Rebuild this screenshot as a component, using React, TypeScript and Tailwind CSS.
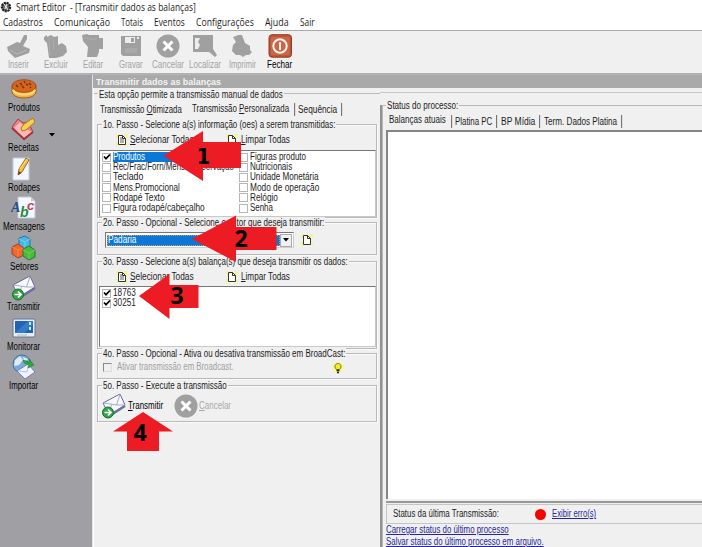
import { useLayoutEffect, useRef } from "react";
import type { ReactNode } from "react";

/* Condensed label: the text is squeezed to the width of its box. */
function T({ w, children, className = "", link = false }: { w: string; children: ReactNode; className?: string; link?: boolean }) {
  const box = useRef<HTMLSpanElement>(null);
  const inner = useRef<HTMLSpanElement>(null);
  useLayoutEffect(() => {
    if (!box.current || !inner.current) return;
    const natural = inner.current.offsetWidth;
    if (natural) inner.current.style.transform = `scaleX(${box.current.clientWidth / natural})`;
  });
  return (
    <span ref={box} className={`block h-3 shrink-0 leading-3 whitespace-pre ${w} ${className}`}>
      <span ref={inner} className={`inline-block origin-left ${link ? "underline" : ""}`}>{children}</span>
    </span>
  );
}

function Group({ legend, w, className = "", children }: { legend: string; w: string; className?: string; children?: ReactNode }) {
  return (
    <section className={`relative w-[280px] shrink-0 border border-[#b9b9b9] shadow-[inset_1px_1px_0_#fafafa,1px_1px_0_#fafafa] ${className}`}>
      <div className="absolute -top-[6px] left-[4px] h-[11px] bg-[#f0f0f0] px-[1px]">
        <T w={w} className="-mt-[0.500px]">{legend}</T>
      </div>
      {children}
    </section>
  );
}

function Doc({ lines = false }: { lines?: boolean }) {
  return (
    <svg viewBox="0 0 12 12" className="size-3 shrink-0">
      <path d="M0 0h4v4H0zM0 8h3v4H0zM8 0h4v4H8zM9 9h3v3H9z" fill="#f5f3a0" />
      <path d="M2.500 1.500h4l3 3v6h-7z" fill="#fffff2" stroke="#333" />
      <path d="M6.500 1.500v3h3" fill="none" stroke="#333" />
      {lines && <path d="M4 4h2M4 6h4M4 8h4" stroke="#333" strokeWidth=".8" />}
    </svg>
  );
}

function Check({ on = false }: { on?: boolean }) {
  return (
    <span className="flex size-[9px] shrink-0 items-center justify-center border border-[#b5b5b5] bg-white">
      {on && (
        <svg viewBox="0 0 8 8" className="size-2 shrink-0">
          <path d="M1 3.500l2 2.200L7 1.500" fill="none" stroke="#000" strokeWidth="1.700" />
        </svg>
      )}
    </span>
  );
}

function SelectButtons() {
  return (
    <div className="flex h-3 items-center pl-[18px]">
      <Doc lines />
      <T w="w-[64px]" className="ml-[2px]"><u>S</u>elecionar Todas</T>
      <span className="w-[32px]" />
      <Doc />
      <T w="w-[49px]" className="ml-[3px]"><u>L</u>impar Todas</T>
    </div>
  );
}

function Mail() {
  return (
    <svg viewBox="0 0 26 26" className="size-[26px] shrink-0">
      <path d="M2 10L19 1l5 11-16 10z" fill="#f8f9ff" stroke="#656b90" />
      <path d="M2.500 10l13 2 3.500-10.500M8 21l2.500-9.500M24 12l-8.500 0" fill="none" stroke="#a4a9cc" />
      <path d="M8 22l16-10 .5 2L9 24z" fill="#6672a0" />
      <circle cx="7" cy="19.500" r="5.500" fill="#31a444" stroke="#17702a" />
      <path d="M3.500 19.500h6M7 16.500l3 3-3 3" fill="none" stroke="#fff" strokeWidth="1.700" />
    </svg>
  );
}

const tool = "size-6 shrink-0";
const toolbar: { label: string; w: string; icon: ReactNode; active?: boolean }[] = [
  { label: "Inserir", w: "w-[21px]", icon: (
    <svg viewBox="0 0 24 24" className={tool} fill="#a0a0a0"><path d="M0 13l10-5 3 1 4-8h3v4l-4 7 7 3-1 4-14 5L1 17z" /><path d="M3 16l7 4 10-4" fill="none" stroke="#b9b9b9" /></svg>) },
  { label: "Excluir", w: "w-[24px]", icon: (
    <svg viewBox="0 0 24 24" className={tool} fill="#a0a0a0"><path d="M0 3l3-2v2l4-2 3 2 4-1v9l4-2 4 3 1 6-4 4-7 2H5L3 9 0 6z" /><path d="M5 4l1 17M9 5l1 11" fill="none" stroke="#adadad" /></svg>) },
  { label: "Editar", w: "w-[20px]", icon: (
    <svg viewBox="0 0 24 24" className={tool} fill="#a0a0a0"><path d="M1 1l5-1 2 1h10v3h4v11h-4v3l-2 5H6l1-10-5-6z" /><path d="M3 4l6 1h7" fill="none" stroke="#adadad" /></svg>) },
  { label: "Gravar", w: "w-[24px]", icon: (
    <svg viewBox="0 0 24 24" className={tool}><path d="M2 2h20v20H4l-2-2z" fill="#a0a0a0" /><path d="M6 3h10v6H6zM18 3h2v2h-2z" fill="#ededed" /><path d="M12 4h3v4h-3z" fill="#a0a0a0" /><path d="M6 14h12v5H6z" fill="#a9a9a9" /></svg>) },
  { label: "Cancelar", w: "w-[32px]", icon: (
    <svg viewBox="0 0 24 24" className={tool}><circle cx="12" cy="12" r="11.500" fill="#a0a0a0" /><path d="M7.500 7.500l9 9m0-9l-9 9" stroke="#fff" strokeWidth="3" /></svg>) },
  { label: "Localizar", w: "w-[32px]", icon: (
    <svg viewBox="0 0 24 24" className={tool}><path d="M0 1h20v14l4 6-2 2-6-5H0z" fill="#a0a0a0" /><path d="M2 4h5l-2 4 2 3-2 4H2z" fill="#ededed" /></svg>) },
  { label: "Imprimir", w: "w-[27px]", icon: (
    <svg viewBox="0 0 24 24" className={tool}><path d="M3 3l3-1 2-1h4l3 8 5 3v4l2 2-3 3h-3l-3 2-3-2H6l-4-4 1-6 3-3z" fill="#a0a0a0" /></svg>) },
  { label: "Fechar", w: "w-[25px]", active: true, icon: (
    <svg viewBox="0 0 24 24" className={tool}><rect x="1" y=".7" width="22.500" height="22.500" rx="3" fill="#bd5538" stroke="#963b24" /><rect x="3" y="3" width="18.500" height="18" rx="1" fill="#c96849" /><circle cx="12" cy="12" r="6.700" fill="none" stroke="#fff2e8" strokeWidth="2" /><path d="M12 8v8" stroke="#fff2e8" strokeWidth="2" /></svg>) },
];

const side = "size-[26px] shrink-0";
const sidebar: { label: string; w: string; icon: ReactNode }[] = [
  { label: "Produtos", w: "w-[32px]", icon: (
    <svg viewBox="0 0 26 26" className={side}><path d="M1 10v6c1 8 23 8 24 0v-6z" fill="#f4b044" stroke="#9c5b16" /><ellipse cx="13" cy="10" rx="12" ry="6.300" fill="#d5661c" stroke="#a44a16" /><path d="M2 14c3 6 19 6 22 0" fill="none" stroke="#ffdd7c" strokeWidth="2" /><path d="M5 9l2 2m2-4l2 2m2-4l1 2m4 0l2 2m-9 1l2 2m2-4l2 1m2 2l1 1" stroke="#792f10" strokeWidth="1.500" /></svg>) },
  { label: "Receitas", w: "w-[31px]", icon: (
    <svg viewBox="0 0 26 26" className={side}><path d="M1 11l6-8 5 4 5-1 5 10-9 8z" fill="#e88488" stroke="#a33e46" /><path d="M3 12l6-6 6 7 6 3-8 7z" fill="#f6babb" /><path d="M1 12l12 11 9-7" fill="none" stroke="#ad303e" strokeWidth="2" /><path d="M10 12l3-4 9-6 2 4-9 8-4 1z" fill="#f8cf50" stroke="#ad7a21" /></svg>) },
  { label: "Rodapes", w: "w-[32px]", icon: (
    <svg viewBox="0 0 26 26" className={side}><path d="M2 2h16v22H2z" fill="#f4f7ff" stroke="#bfcce4" /><path d="M7 19l1-6 7-11 3 2-7 12z" fill="#f7bd38" stroke="#996d22" /><path d="M9 13l7-10" stroke="#ffe58d" /><path d="M7 19l.5-4 3 2z" fill="#5b4634" /></svg>) },
  { label: "Mensagens", w: "w-[42px]", icon: (
    <svg viewBox="0 0 26 26" className={side}><path d="M7 2h13l4 4v17H7z" fill="#f5f8ff" stroke="#bdc7dd" /><path d="M20 2v4h4" fill="#bdc7dd" /><text x="0" y="17" className="fill-[#25508f] font-['Liberation_Serif'] text-[14px] font-bold italic">A</text><text x="9" y="22" className="fill-[#268b38] font-['Liberation_Sans'] text-[14px] font-bold italic">b</text><text x="16" y="15" className="fill-[#c53d50] font-['Liberation_Sans'] text-[13px] font-bold italic">c</text></svg>) },
  { label: "Setores", w: "w-[28px]", icon: (
    <svg viewBox="0 0 26 26" className={side}><path d="M8 3l6-2 5 3v8l-5 3-6-3z" fill="#48b7e8" stroke="#2576a8" /><path d="M8 4l6 3 5-3M14 7v7" fill="none" stroke="#75ccf0" /><path d="M1 12l6-3 6 4v7l-6 3-6-4z" fill="#f3652b" stroke="#a63d1d" /><path d="M1 12l6 3 6-2M7 15v7" fill="none" stroke="#f98658" /><path d="M12 14l6-3 6 4v7l-6 3-6-4z" fill="#4aba3b" stroke="#237b26" /><path d="M12 15l6 3 6-3M18 18v6" fill="none" stroke="#74cf60" /></svg>) },
  { label: "Transmitir", w: "w-[33px]", icon: <Mail /> },
  { label: "Monitorar", w: "w-[33px]", icon: (
    <svg viewBox="0 0 26 26" className={side}><path d="M2 4h22v18H2z" fill="#e9edf5" stroke="#667591" /><path d="M4 6h18v12H4z" fill="#2264b3" /><path d="M4 18l13-12h5v4l-9 8z" fill="#337dc6" /><path d="M18 7h2v3h-2zM18 12h2v3h-2z" fill="#c6e7fa" /><path d="M6 20h10" stroke="#adb7c7" /></svg>) },
  { label: "Importar", w: "w-[29px]", icon: (
    <svg viewBox="0 0 26 26" className={side}><circle cx="11" cy="10" r="9" fill="#7baadb" stroke="#426f9f" /><path d="M4 6l5-4 3 4-4 5-5 1zM12 3l5 2-4 4z" fill="#dceafa" /><path d="M6 17l11-7 7 8-10 7z" fill="#edf3ff" stroke="#7083ae" /><path d="M7 17l9 1 1-7" fill="none" stroke="#b4c5e2" /><path d="M12 6l7 2-1-3 5 6-6 3 1-3-5-2z" fill="#2caa3d" stroke="#167328" strokeWidth=".5" /></svg>) },
];

const left: [string, string, boolean][] = [
  ["Produtos", "w-[32px]", true],
  ["Rec/Frac/Forn/Mens/Conservação", "w-[121px]", false],
  ["Teclado", "w-[30px]", false],
  ["Mens.Promocional", "w-[67px]", false],
  ["Rodapé Texto", "w-[52px]", false],
  ["Figura rodapé/cabeçalho", "w-[92px]", false],
];
const right: [string, string][] = [
  ["Figuras produto", "w-[56px]"],
  ["Nutricionais", "w-[42px]"],
  ["Unidade Monetária", "w-[69px]"],
  ["Modo de operação", "w-[69px]"],
  ["Relógio", "w-[28px]"],
  ["Senha", "w-[23px]"],
];

function Sep() {
  return <span className="h-[13px] w-[2px] shrink-0 border-l border-[#777] bg-[#dedede]" />;
}

/* Numbered tutorial arrows lying over the window. */
function Arrows() {
  const num = "fill-black font-['Open_Sans',sans-serif] text-[23px] font-bold";
  return (
    <svg viewBox="0 0 702 547" className="pointer-events-none absolute inset-0 h-[547px] w-[702px]">
      <g fill="#ed1c24">
        <path d="M163.500 155.700L203 131v11h38v26h-38v13z" />
        <path d="M192 239l44-23.500V227h40.500v23H236v12z" />
        <path d="M139 296l30.500-22v11h29v23h-29v11z" />
        <path d="M143 412l30 19.500h-14V451h-32v-19.500h-14z" />
      </g>
      <text x="196.500" y="164" className="fill-black font-['DejaVu_Sans_Condensed','DejaVu_Sans',sans-serif] text-[22px] font-bold">1</text>
      <text x="234.500" y="246.500" className={num}>2</text>
      <text x="170.500" y="304" className={num}>3</text>
      <text x="133.500" y="440.500" className={num}>4</text>
    </svg>
  );
}

export default function App() {
  return (
    <div className="relative flex h-[547px] w-[702px] flex-col overflow-hidden bg-[#f0f0f0] font-['Liberation_Sans',Arial,sans-serif] text-[10px] text-[#1c1c1c]">
      <header className="flex h-[14px] shrink-0 items-center bg-white font-['Open_Sans',sans-serif] text-[10px]">
        <svg viewBox="0 0 12 12" className="size-3 shrink-0"><circle cx="6" cy="6" r="4" fill="#777" stroke="#222" strokeWidth="2.500" strokeDasharray="2 .7" /><path d="M4 3l4 6M7 3L5 8" stroke="#eee" /></svg>
        <T w="w-[180px]" className="ml-1">{"Smart Editor  - [Transmitir dados as balanças]"}</T>
      </header>
      <nav className="flex h-[16px] shrink-0 items-center gap-[11px] bg-white pl-[3px] font-['Open_Sans',sans-serif] text-[10px]">
        <T w="w-[40px]">Cadastros</T>
        <T w="w-[56px]">Comunicação</T>
        <T w="w-[22px]">Totais</T>
        <T w="w-[31px]">Eventos</T>
        <T w="w-[58px]">Configurações</T>
        <T w="w-[24px]">Ajuda</T>
        <T w="w-[15px]">Sair</T>
      </nav>
      <div className="flex h-[45px] shrink-0 border-t border-b-2 border-t-[#a9a9a9] border-b-[#b2b2b2] pt-[3px]">
        {toolbar.map((t) => (
          <div key={t.label} className={`flex w-[37.300px] shrink-0 flex-col items-center ${t.active ? "text-black" : "text-[#a3a3a3]"}`}>
            {t.icon}
            <T w={t.w} className="mt-[1px]">{t.label}</T>
          </div>
        ))}
      </div>

      <div className="flex min-h-0 flex-1">
        <aside className="flex w-[92px] shrink-0 flex-col bg-[#a0a0a4] pt-[1px]">
          {sidebar.map((s) => (
            <div key={s.label} className="flex h-[39.750px] shrink-0 items-start">
              <div className="flex w-[47px] flex-col items-center">
                {s.icon}
                <T w={s.w} className="text-black">{s.label}</T>
              </div>
              {s.label === "Receitas" && (
                <svg viewBox="0 0 6 4" className="mt-[17px] ml-[2px] h-1 w-[6px]"><path d="M0 0h6L3 3.500z" fill="#000" /></svg>
              )}
            </div>
          ))}
        </aside>

        <main className="flex min-w-0 flex-1 flex-col border-l border-[#e4e4e4]">
          <div className="flex h-[13px] shrink-0 items-center bg-[#a9a9a9] pl-[3px] text-[9.500px] font-bold text-[#f4f4f4]">
            <T w="w-[125px]">Transmitir dados as balanças</T>
          </div>
          <div className="flex min-h-0 flex-1">
            {/* options column */}
            <div className="flex w-[287px] shrink-0 flex-col border-l border-white pt-[5px]">
              <div className="relative h-[9px] shrink-0 border-t border-[#bdbdbd]">
                <div className="absolute -top-[5px] left-[4px] bg-[#f0f0f0] px-[1px]">
                  <T w="w-[184px]">Esta opção permite a transmissão manual de dados</T>
                </div>
              </div>
              <div className="relative flex h-[15px] shrink-0 items-center pl-[6px]">
                <T w="w-[82px]" className="mt-[1px]">Transmissão <u>O</u>timizada</T>
                <T w="w-[97px]" className="-mt-[2px] mr-[5px] ml-[10px]">Transmissão <u>P</u>ersonalizada</T>
                <Sep />
                <T w="w-[39px]" className="mt-[1px] mr-[4px] ml-[2px]">Sequência</T>
                <Sep />
              </div>
              <div className="flex flex-col pt-[7px] pl-[3px]">
                <Group legend="1o. Passo - Selecione a(s) informação (oes) a serem transmitidas:" w="w-[232px]" className="h-[94px] pt-[9px]">
                  <SelectButtons />
                  <div className="mt-[4px] ml-[1px] flex h-[67px] w-[277px] border border-[#c8c8c8] border-t-[#777] border-l-[#777] bg-white pt-[1px]">
                    <div className="w-[137px] pl-[2px]">
                      {left.map(([label, w, on]) => (
                        <div key={label} className="flex h-[10.200px] items-center">
                          <Check on={on} />
                          <span className={`ml-[2px] flex h-[10px] items-center ${on ? "w-[123px] bg-[#0b78d7] text-white" : ""}`}>
                            <T w={w}>{label}</T>
                          </span>
                        </div>
                      ))}
                    </div>
                    <div className="pl-[2px]">
                      {right.map(([label, w]) => (
                        <div key={label} className="flex h-[10.200px] items-center gap-[2px]">
                          <Check />
                          <T w={w}>{label}</T>
                        </div>
                      ))}
                    </div>
                  </div>
                </Group>
                <Group legend="2o. Passo - Opcional - Selecione o setor que deseja transmitir:" w="w-[221px]" className="mt-[4px] h-[33px] pt-[9px]">
                  <div className="flex items-center pl-[7px]">
                    <div className="flex h-[16px] w-[189px] items-center border border-[#d0d0d0] border-t-[#777] border-l-[#777] bg-white p-[1px]">
                      <div className="flex h-[11px] flex-1 items-center border border-dotted border-[#d39a58] bg-[#0b78d7] text-white">
                        <T w="w-[28px]">Padaria</T>
                      </div>
                      <div className="flex h-[13px] w-[12px] items-center justify-center border border-[#aaa] bg-[#f0f0f0]">
                        <svg viewBox="0 0 6 4" className="h-[4px] w-[6px]"><path d="M0 0h6L3 3.500z" /></svg>
                      </div>
                    </div>
                    <span className="w-[7px]" />
                    <Doc />
                  </div>
                </Group>
                <Group legend="3o. Passo - Selecione a(s) balança(s) que deseja transmitir os dados:" w="w-[245px]" className="mt-[6px] h-[88px] pt-[9px]">
                  <SelectButtons />
                  <div className="mt-[3px] ml-[1px] h-[61px] w-[277px] border border-[#c8c8c8] border-t-[#777] border-l-[#777] bg-white pt-[1px] pl-[2px]">
                    {["18763", "30251"].map((n) => (
                      <div key={n} className="flex h-[10px] items-center gap-[2px]">
                        <Check on />
                        <T w="w-[23px]">{n}</T>
                      </div>
                    ))}
                  </div>
                </Group>
                <Group legend="4o. Passo - Opcional - Ativa ou desativa transmissão em BroadCast:" w="w-[242px]" className="mt-[4px] h-[26px] pt-[6px]">
                  <div className="flex items-center pl-[5px] text-[#a0a0a0]">
                    <span className="size-[9px] border border-[#ddd] border-t-[#888] border-l-[#888]" />
                    <T w="w-[117px]" className="ml-[5px]">Ativar transmissão em Broadcast.</T>
                    <svg viewBox="0 0 12 12" className="mt-[2px] ml-[98px] size-3"><circle cx="6" cy="5.500" r="5.500" fill="#f7f69a" /><path d="M4.500 7.500C1 4 4 1.500 6 1.500S11 4 7.500 7.500z" fill="#f4ef24" stroke="#77751b" /><path d="M4.500 8.500h3M5 10.500h2" stroke="#222" strokeWidth="1.500" /></svg>
                  </div>
                </Group>
                <Group legend="5o. Passo - Execute a transmissão" w="w-[124px]" className="mt-[6px] h-[37px] pt-[7px]">
                  <div className="flex items-center pl-[3px]">
                    <Mail />
                    <T w="w-[35px]" className="ml-[1px] text-black"><u>T</u>ransmitir</T>
                    <svg viewBox="0 0 24 24" className="ml-[11px] size-6 shrink-0"><circle cx="12" cy="12" r="11.500" fill="#a0a0a0" /><path d="M7.500 7.500l9 9m0-9l-9 9" stroke="#fff" strokeWidth="3" /></svg>
                    <T w="w-[32px]" className="ml-[1px] text-[#a8a8a8]"><u>C</u>ancelar</T>
                  </div>
                </Group>
              </div>
            </div>

            {/* process status column */}
            <div className="flex min-w-0 flex-1 flex-col">
              <div className="h-[5px] shrink-0 border-b border-[#c8c8c8]" />
              <div className="mt-[12px] flex min-h-0 flex-1 flex-col border-l-2 border-[#929292]">
                <div className="relative flex min-h-0 flex-1 flex-col border-t border-l border-[#b9b9b9] pl-[3px]">
                  <div className="absolute -top-[6px] left-[3px] bg-[#f0f0f0] px-[1px]">
                    <T w="w-[71px]">Status do processo:</T>
                  </div>
                  <div className="mt-[8px] flex h-[14px] shrink-0 items-center pl-[3px]">
                    <T w="w-[57px]" className="-mt-[2px] mr-[5px]">Balanças atuais</T>
                    <Sep />
                    <T w="w-[37px]" className="mt-[1px] mr-[4px] ml-[2px]">Platina PC</T>
                    <Sep />
                    <T w="w-[34px]" className="mt-[1px] mr-[4px] ml-[3px]">BP Mídia</T>
                    <Sep />
                    <T w="w-[73px]" className="mt-[1px] mr-[4px] ml-[3px]">Term. Dados Platina</T>
                    <Sep />
                  </div>
                  <div className="mt-[2px] h-[369px] shrink-0 border-t-2 border-l-2 border-[#858585] bg-white" />
                  <div className="mt-[2px] h-[2px] shrink-0 bg-[#979797]" />
                  <div className="mt-[1px] flex h-[20px] shrink-0 items-center border border-r-0 border-[#c5c5c5] pl-[6px]">
                    <T w="w-[106px]">Status da última Transmissão:</T>
                    <span className="ml-[36px] size-[11px] rounded-full bg-[#f80000]" />
                    <T w="w-[44px]" className="ml-[6px] text-[#26269a]" link>Exibir erro(s)</T>
                  </div>
                  <div className="text-[#26269a]">
                    <T w="w-[123px]" link>Carregar status do último processo</T>
                    <T w="w-[158px]" link>Salvar status do último processo em arquivo.</T>
                  </div>
                </div>
              </div>
            </div>
          </div>
        </main>
      </div>
      <Arrows />
    </div>
  );
}
